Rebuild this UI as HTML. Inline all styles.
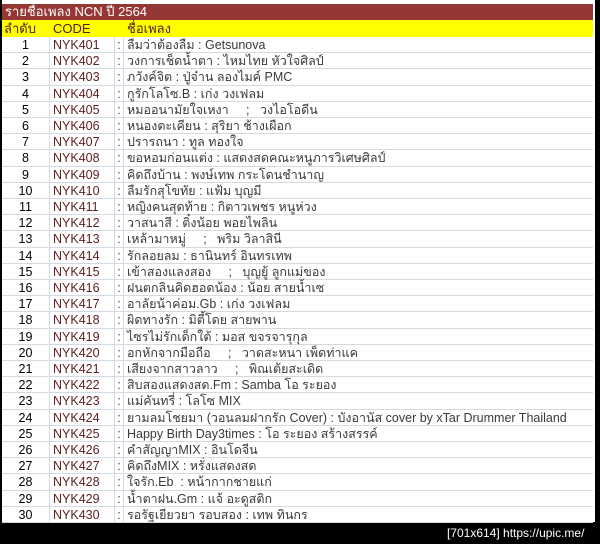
<!DOCTYPE html>
<html><head><meta charset="utf-8"><style>
body{margin:0;width:600px;height:544px;background:#000;overflow:hidden;font-family:"Liberation Sans","Noto Sans CJK SC",sans-serif;}
#s{position:absolute;left:2px;top:0;width:593px;height:522px;background:#fff;}
#t{position:absolute;left:2px;top:4px;width:591px;height:16px;background:#953735;color:#fff;font-size:13px;line-height:16px;padding-left:3px;box-sizing:border-box;}
#h{position:absolute;left:2px;top:20px;width:591px;height:17px;background:#ffff00;font-size:13px;line-height:17px;color:#5a2020;}
.r{position:absolute;left:2px;width:591px;height:16.2px;border-bottom:1px solid #d4dae3;box-sizing:border-box;font-size:12.5px;line-height:16px;}
.c1,.c2,.c3,.c4{position:absolute;top:0;height:100%;box-sizing:border-box;white-space:nowrap;}
.c1{left:0;width:48px;text-align:center;border-right:1px solid #d4dae3;}
.c2{left:48px;width:65px;padding-left:3px;border-right:1px solid #d4dae3;color:#5e2222;}
.c3{left:113px;width:9px;text-align:center;border-right:1px solid #d4dae3;color:#444;}
.c4{left:122px;padding-left:3px;color:#3a3a3a;}
#f{position:absolute;left:447px;top:525px;color:#fff;font-size:12px;line-height:16px;font-family:"Liberation Sans",sans-serif;white-space:nowrap;}
</style></head><body>
<div id="s"></div>
<div id="t">รายชื่อเพลง NCN ปี 2564</div>
<div id="h"><span style="position:absolute;left:2px">ลำดับ</span><span style="position:absolute;left:51px">CODE</span><span style="position:absolute;left:125px">ชื่อเพลง</span></div>
<div id="rows"></div>
<div id="f">[701x614] https://upic.me/</div>
<script>
var s=["ลืมว่าต้องลืม : Getsunova","วงการเช็ดน้ำตา : ไหมไทย หัวใจศิลป์","ภวังค์จิต : ปู่จ๋าน ลองไมค์ PMC","กูรักโลโซ.B : เก่ง วงเฟลม","หมออนามัยใจเหงา &nbsp; &nbsp; ; &nbsp; วงไอโอดีน","หนองตะเคียน : สุริยา ช้างเผือก","ปรารถนา : ทูล ทองใจ","ขอหอมก่อนแต่ง : แสดงสดคณะหนูภารวิเศษศิลป์","คิดถึงบ้าน : พงษ์เทพ กระโดนชำนาญ","ลืมรักสุโขทัย : แฟ้ม บุญมี","หญิงคนสุดท้าย : กิตาวเพชร หนูห่วง","วาสนาสี : ติ๋งน้อย พอยไพลิน","เหล้ามาหมู่ &nbsp; &nbsp; ; &nbsp; พริม วิลาสินี","รักลอยลม : ธานินทร์ อินทรเทพ","เข้าสองแลงสอง &nbsp; &nbsp; ; &nbsp; บุญยู้ ลูกแม่ของ","ฝนตกลินคิดฮอดน้อง : น้อย สายน้ำเซ","อาลัยน้าค่อม.Gb : เก่ง วงเฟลม","ผิดทางรัก : มิตี้โดย สายพาน","ไซรไม่รักเด็กใต้ : มอส ขจรจารุกุล","อกหักจากมือถือ &nbsp; &nbsp; ; &nbsp; วาดสะหนา เพ็ดท่าแค","เสียงจากสาวลาว &nbsp; &nbsp; ; &nbsp; พิณเต้ยสะเดิด","สิบสองแสดงสด.Fm : Samba โอ ระยอง","แม่คันทรี่ : โลโซ MIX","ยามลมโชยมา (วอนลมฝากรัก Cover) : บังอานัส cover by xTar Drummer Thailand","Happy Birth Day3times : โอ ระยอง สร้างสรรค์","คำสัญญาMIX : อินโดจีน","คิดถึงMIX : หรั่งแสดงสด","ใจรัก.Eb &nbsp;: หน้ากากชายแก่","น้ำตาฝน.Gm : แจ้ อะดูสติก","รอรัฐเยียวยา รอบสอง : เทพ ทินกร"];
var h="";for(var i=0;i<30;i++){h+='<div class="r" style="top:'+(37+i*16.2)+'px"><div class="c1">'+(i+1)+'</div><div class="c2">NYK'+(401+i)+'</div><div class="c3">:</div><div class="c4">'+s[i]+'</div></div>';}
document.getElementById("rows").innerHTML=h;
</script>
</body></html>
